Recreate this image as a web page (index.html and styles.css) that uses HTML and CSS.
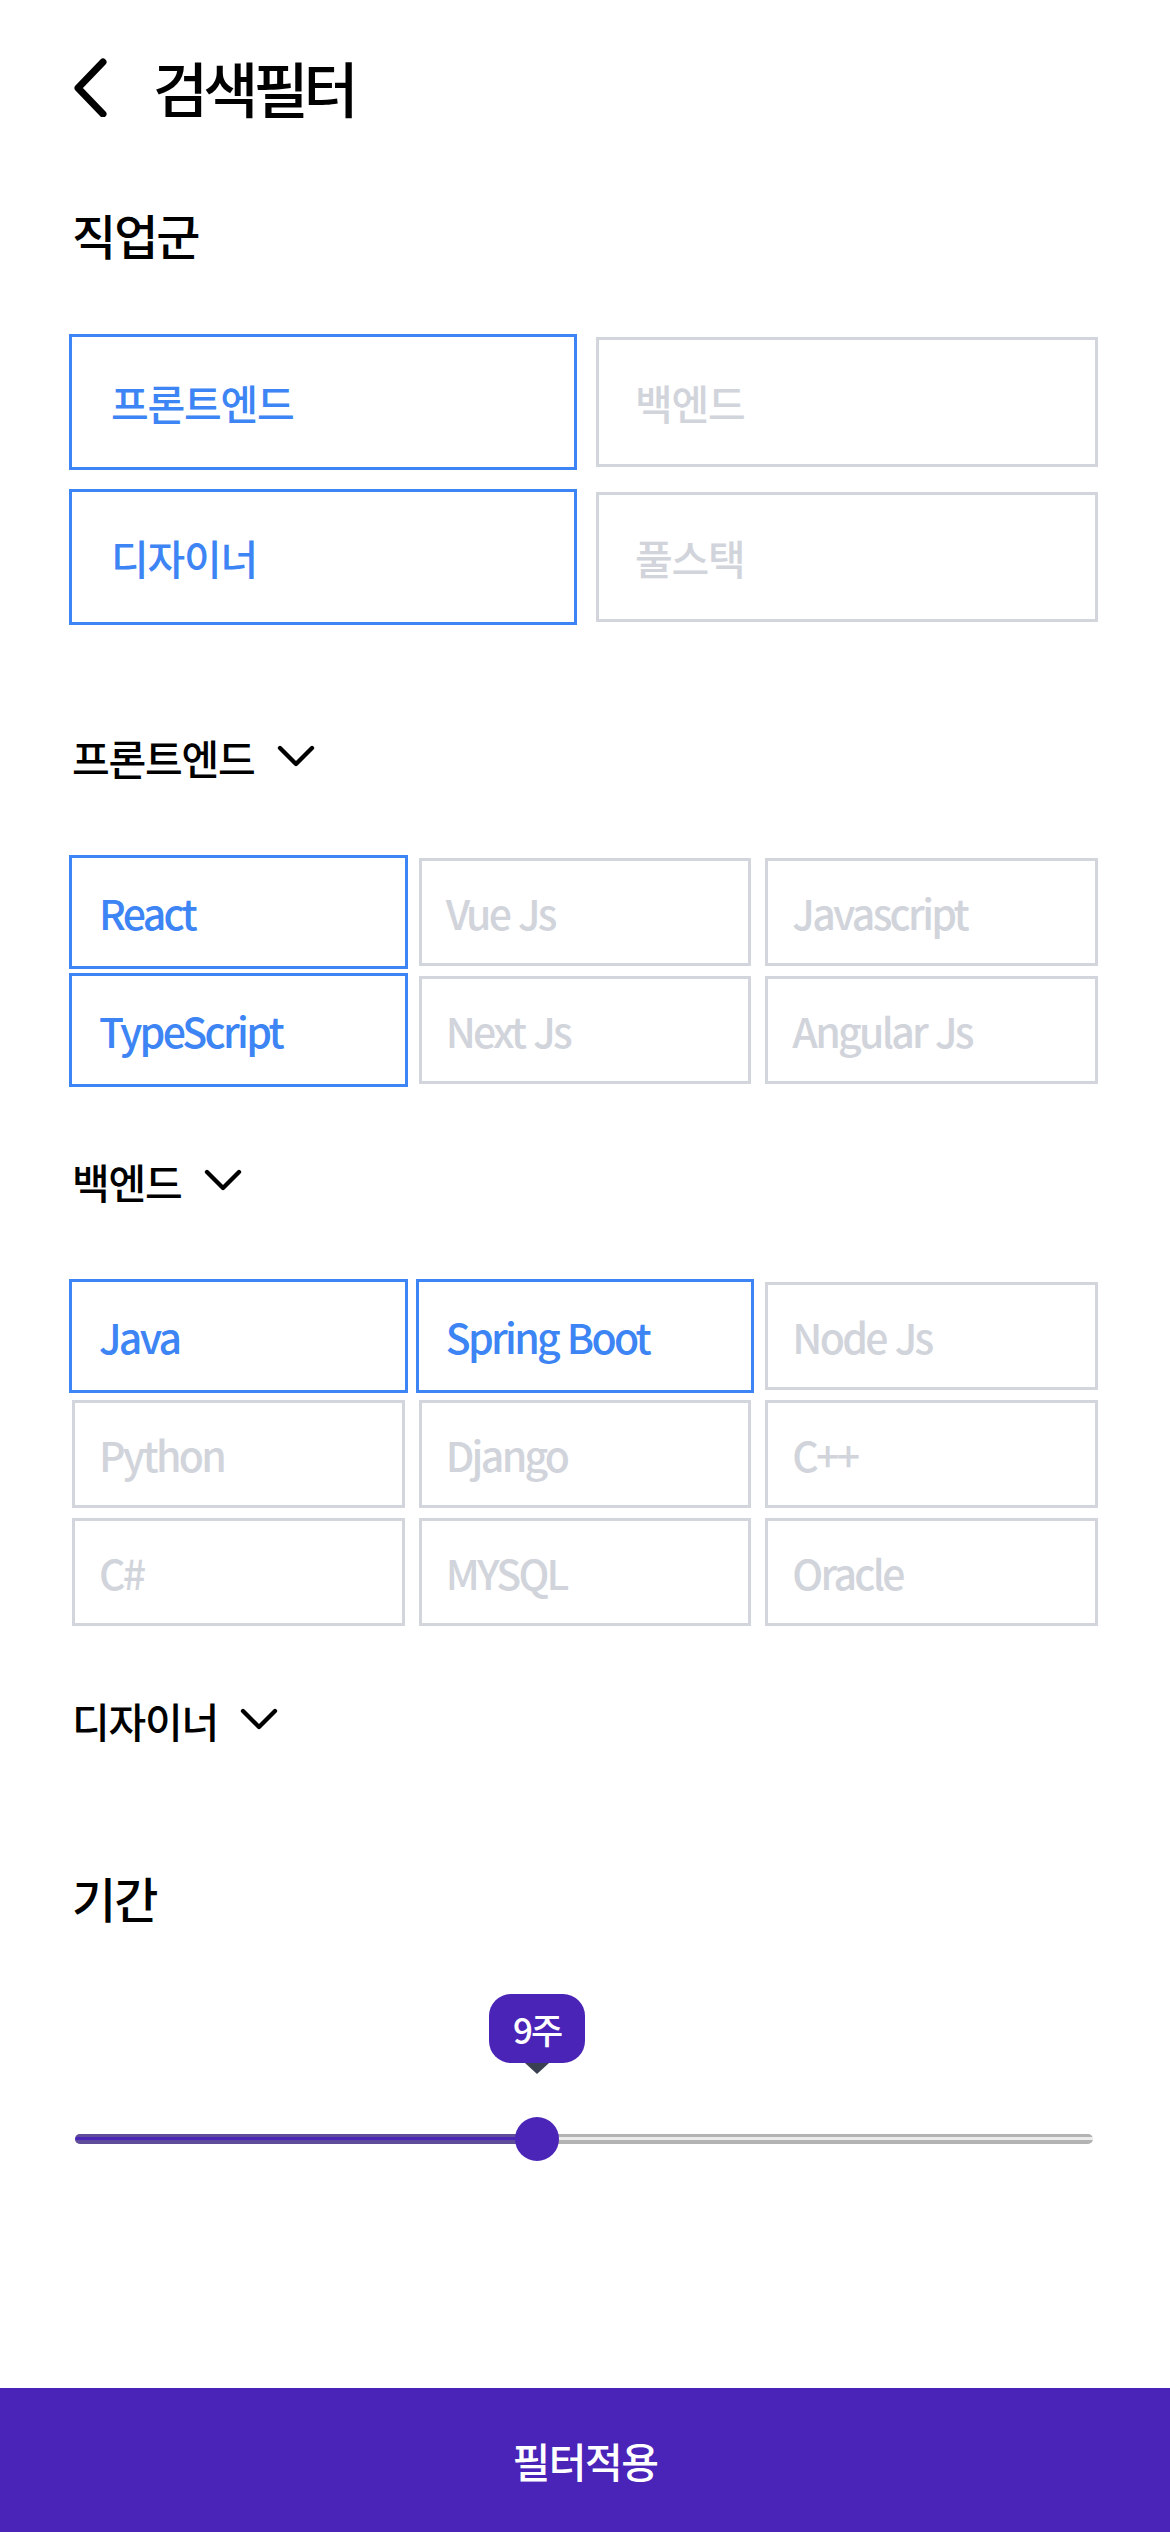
FILE: index.html
```html
<!DOCTYPE html>
<html lang="ko">
<head>
<meta charset="utf-8">
<title>검색필터</title>
<link rel="stylesheet" href="styles.css">
</head>
<body>
<div class="page">
  <header class="topbar">
    <button class="back" aria-label="뒤로">
      <svg width="40" height="60" viewBox="0 0 40 60"><polyline points="31,5 6,31 31,57" fill="none" stroke="#000" stroke-width="7" stroke-linecap="round" stroke-linejoin="round"/></svg>
    </button>
    <h1 class="title">검색필터</h1>
  </header>

  <main class="content">
    <h2 class="section-title jobs-title">직업군</h2>
    <div class="grid grid-2">
      <div class="chip on ko">프론트엔드</div>
      <div class="chip ko">백엔드</div>
      <div class="chip on ko">디자이너</div>
      <div class="chip ko">풀스택</div>
    </div>

    <h3 class="sub-title fe-title">프론트엔드 <svg class="caret" width="38" height="22" viewBox="0 0 38 22"><polyline points="3,3 19,19 35,3" fill="none" stroke="#000" stroke-width="4.3" stroke-linecap="round" stroke-linejoin="round"/></svg></h3>
    <div class="grid grid-3 fe-grid">
      <div class="chip on">React</div>
      <div class="chip">Vue Js</div>
      <div class="chip">Javascript</div>
      <div class="chip on">TypeScript</div>
      <div class="chip">Next Js</div>
      <div class="chip">Angular Js</div>
    </div>

    <h3 class="sub-title be-title">백엔드 <svg class="caret" width="38" height="22" viewBox="0 0 38 22"><polyline points="3,3 19,19 35,3" fill="none" stroke="#000" stroke-width="4.3" stroke-linecap="round" stroke-linejoin="round"/></svg></h3>
    <div class="grid grid-3 be-grid">
      <div class="chip on">Java</div>
      <div class="chip on">Spring Boot</div>
      <div class="chip">Node Js</div>
      <div class="chip">Python</div>
      <div class="chip">Django</div>
      <div class="chip">C++</div>
      <div class="chip">C#</div>
      <div class="chip">MYSQL</div>
      <div class="chip">Oracle</div>
    </div>

    <h3 class="sub-title de-title">디자이너 <svg class="caret" width="38" height="22" viewBox="0 0 38 22"><polyline points="3,3 19,19 35,3" fill="none" stroke="#000" stroke-width="4.3" stroke-linecap="round" stroke-linejoin="round"/></svg></h3>

    <h2 class="section-title period-title">기간</h2>
    <div class="slider">
      <div class="rail">
        <div class="track"></div>
        <div class="fill" style="width:45.4%"></div>
        <div class="thumb" style="left:45.4%"></div>
        <div class="tooltip" style="left:45.4%">9주</div>
      </div>
    </div>
  </main>

  <footer class="apply">필터적용</footer>
</div>
</body>
</html>
```

FILE: styles.css
```css
* { box-sizing: border-box; }
html, body { margin: 0; padding: 0; background: #fff; }
body {
  font-family: "Noto Sans CJK KR", "Noto Sans", sans-serif;
  color: #111;
}
.page {
  min-height: 100vh;
  display: flex;
  flex-direction: column;
}
.topbar {
  display: flex;
  align-items: center;
  gap: 41px;
  padding: 57px 69px 0 72px;
}
.back {
  border: 0;
  background: none;
  padding: 0;
  width: 40px;
  height: 60px;
  display: flex;
}
.title {
  margin: 0;
  font-size: 60px;
  line-height: 60px;
  font-weight: 500;
  letter-spacing: -5px;
  color: #000;
}
.content {
  padding: 0 69px;
  display: flex;
  flex-direction: column;
}
.section-title {
  margin: 0;
  padding-left: 3px;
  font-size: 48px;
  line-height: 46px;
  font-weight: 500;
  letter-spacing: -2px;
  color: #000;
}
.jobs-title { margin-top: 94px; }
.period-title { margin-top: 134px; }
.sub-title {
  margin: 0;
  padding-left: 3px;
  display: flex;
  align-items: center;
  gap: 22px;
  font-size: 41px;
  line-height: 40px;
  font-weight: 500;
  letter-spacing: -1.2px;
  color: #000;
}
.caret { display: block; margin-top: -2px; }
.fe-title { margin-top: 112px; }
.be-title { margin-top: 74px; }
.de-title { margin-top: 71px; }

.grid { display: grid; }
.grid-2 {
  margin-top: 77px;
  grid-template-columns: 1fr 1fr;
  grid-auto-rows: 136px;
  column-gap: 16px;
  row-gap: 19px;
}
.grid-3 {
  margin-top: 78px;
  grid-template-columns: 1fr 1fr 1fr;
  grid-auto-rows: 114px;
  column-gap: 8px;
  row-gap: 4px;
}
.chip {
  display: flex;
  align-items: center;
  border: 3px solid #fff;
  box-shadow: inset 0 0 0 3px #d3d5dc;
  color: #d1d4db;
  font-size: 41px;
  font-weight: 500;
  letter-spacing: -2.7px;
  line-height: 1;
  padding-left: 27px;
  white-space: nowrap;
}
.grid-2 .chip { padding-left: 39px; }
.chip.ko { letter-spacing: -1.2px; }
.chip.on {
  border-color: #3d84f4;
  box-shadow: none;
  color: #3d84f4;
}

.slider {
  margin-top: 74px;
  height: 172px;
  position: relative;
}
.rail {
  position: absolute;
  left: 6px;
  right: 8px;
  top: 140px;
  height: 10px;
}
.track {
  position: absolute;
  inset: 0;
  border-radius: 5px;
  background: linear-gradient(#b3b3b3 0 3.5px, #ececec 3.5px 6px, #b3b3b3 6px);
}
.fill {
  position: absolute;
  left: 0; top: 0; bottom: 0;
  border-radius: 5px;
  background: linear-gradient(#5f4c9a 0 3.5px, #4a25b8 3.5px 6px, #5f4c9a 6px);
}
.thumb {
  position: absolute;
  top: 50%;
  width: 44px;
  height: 44px;
  border-radius: 50%;
  background: #4a25b8;
  transform: translate(-50%, -50%);
}
.tooltip {
  position: absolute;
  top: -140px;
  width: 96px;
  height: 69px;
  transform: translateX(-50%);
  background: #4a24b7;
  border-radius: 22px;
  color: #fff;
  font-size: 35px;
  font-weight: 500;
  letter-spacing: -2px;
  display: flex;
  align-items: center;
  justify-content: center;
}
.tooltip::after {
  content: "";
  position: absolute;
  left: 50%;
  top: 100%;
  transform: translateX(-50%);
  border-left: 12px solid transparent;
  border-right: 12px solid transparent;
  border-top: 11px solid #3a4051;
}
.apply {
  margin-top: auto;
  height: 144px;
  background: #4a23b8;
  color: #fff;
  font-size: 41px;
  font-weight: 500;
  letter-spacing: -1.5px;
  display: flex;
  align-items: center;
  justify-content: center;
}
```
